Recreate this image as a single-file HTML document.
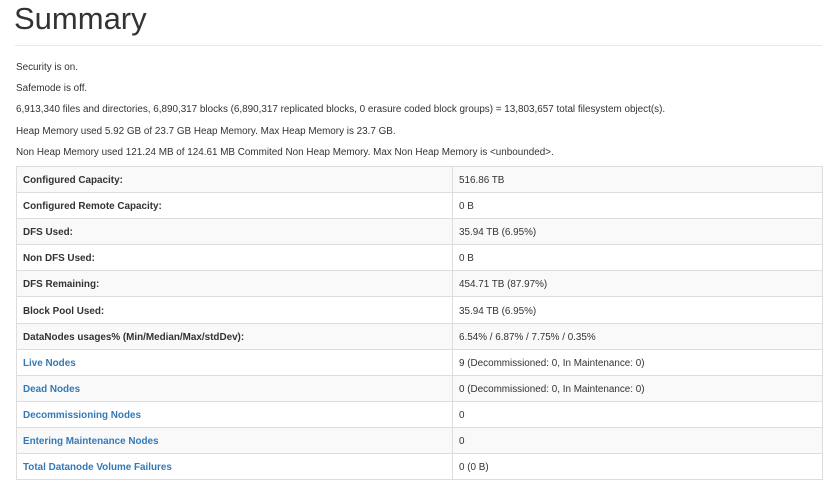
<!DOCTYPE html><html><head><style>
body{margin:0;background:#fff;font-family:"Liberation Sans",Arial,sans-serif;color:#333;font-size:9.9px;width:839px;height:495px;overflow:hidden}
h1{font-weight:normal;font-size:31px;margin:0;position:absolute;left:14px;top:2px;line-height:34px}
.hr{position:absolute;left:15px;width:807px;top:45px;border-top:1px solid #e8e8e8}
.p{position:absolute;left:16px;line-height:12px}
table{position:absolute;left:16px;top:166px;width:807px;border-collapse:collapse}
td{border:1px solid #ddd;height:25px;padding:3px 6px 0;line-height:12px;box-sizing:border-box}
td:first-child{width:436px;font-weight:bold}
tr{height:26.1px}
tr:nth-child(odd) td{background:#f9f9f9}
a{color:#337ab7;text-decoration:none}
</style></head><body>
<h1>Summary</h1><div class="hr"></div>
<div class="p" style="top:62px">Security is on.</div>
<div class="p" style="top:83px">Safemode is off.</div>
<div class="p" style="top:104px">6,913,340 files and directories, 6,890,317 blocks (6,890,317 replicated blocks, 0 erasure coded block groups) = 13,803,657 total filesystem object(s).</div>
<div class="p" style="top:126px">Heap Memory used 5.92 GB of 23.7 GB Heap Memory. Max Heap Memory is 23.7 GB.</div>
<div class="p" style="top:147px">Non Heap Memory used 121.24 MB of 124.61 MB Commited Non Heap Memory. Max Non Heap Memory is &lt;unbounded&gt;.</div>
<table>
<tr><td>Configured Capacity:</td><td>516.86 TB</td></tr>
<tr><td>Configured Remote Capacity:</td><td>0 B</td></tr>
<tr><td>DFS Used:</td><td>35.94 TB (6.95%)</td></tr>
<tr><td>Non DFS Used:</td><td>0 B</td></tr>
<tr><td>DFS Remaining:</td><td>454.71 TB (87.97%)</td></tr>
<tr><td>Block Pool Used:</td><td>35.94 TB (6.95%)</td></tr>
<tr><td>DataNodes usages% (Min/Median/Max/stdDev):</td><td>6.54% / 6.87% / 7.75% / 0.35%</td></tr>
<tr><td><a>Live Nodes</a></td><td>9 (Decommissioned: 0, In Maintenance: 0)</td></tr>
<tr><td><a>Dead Nodes</a></td><td>0 (Decommissioned: 0, In Maintenance: 0)</td></tr>
<tr><td><a>Decommissioning Nodes</a></td><td>0</td></tr>
<tr><td><a>Entering Maintenance Nodes</a></td><td>0</td></tr>
<tr><td><a>Total Datanode Volume Failures</a></td><td>0 (0 B)</td></tr>
</table>
</body></html>
